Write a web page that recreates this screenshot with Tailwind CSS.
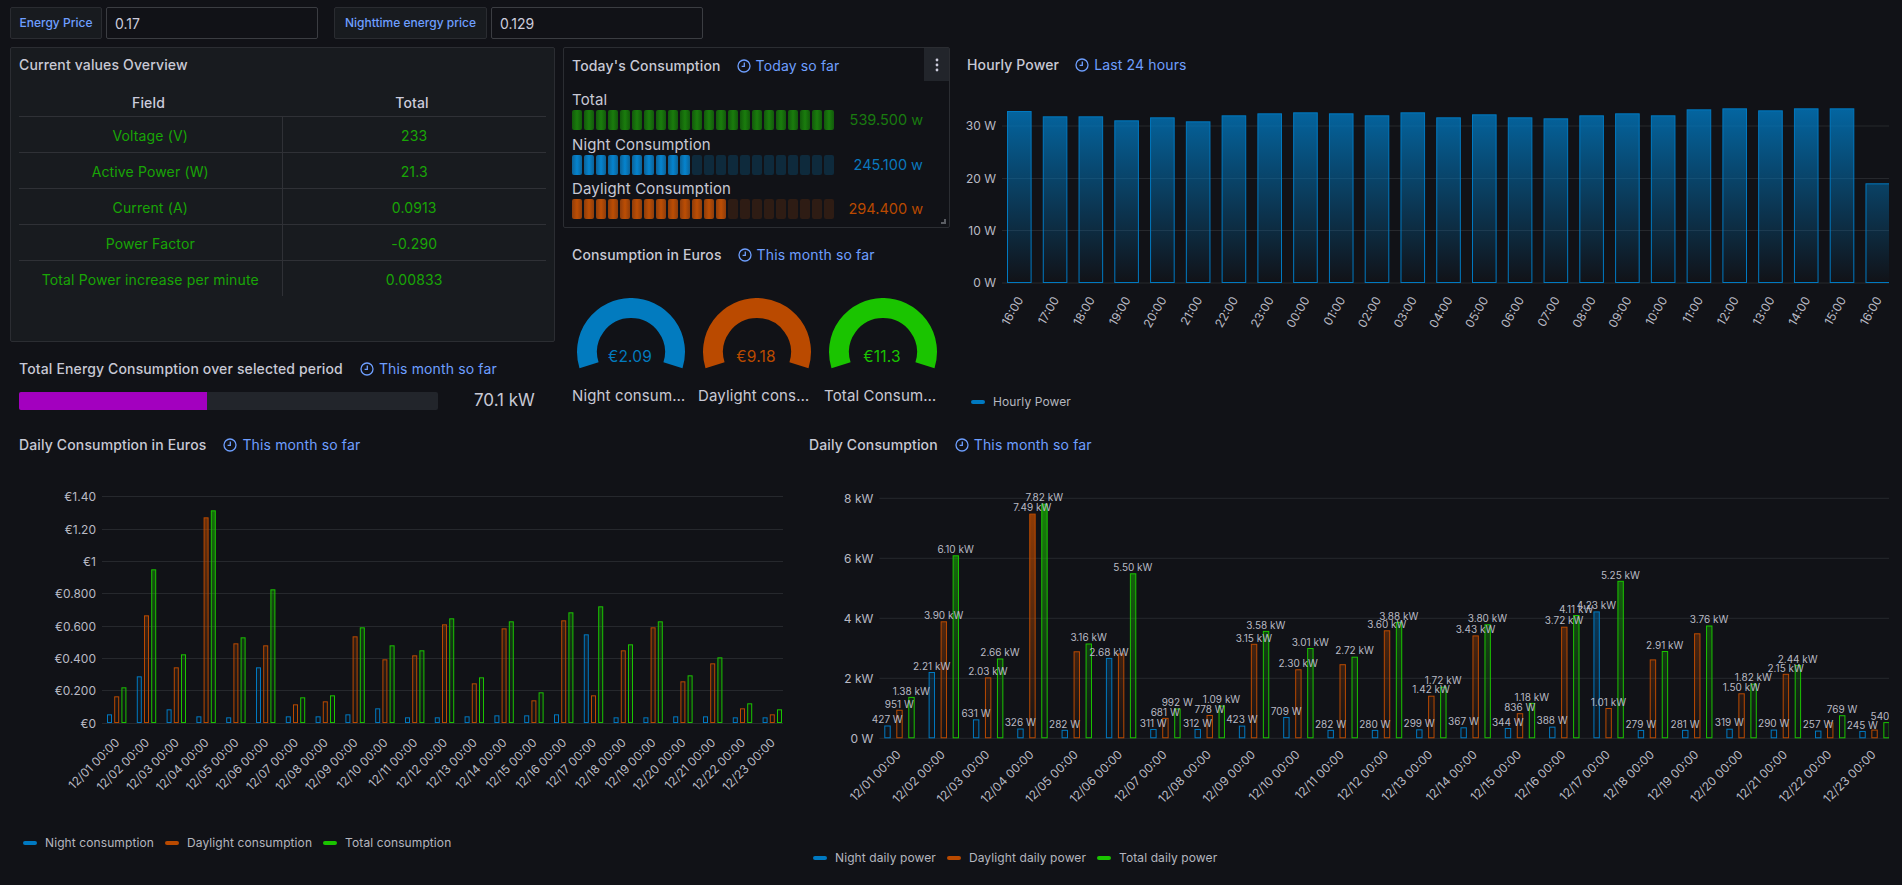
<!DOCTYPE html>
<html lang="en">
<head>
  <meta charset="UTF-8">
  <title>Energy Dashboard</title>
  <script src="https://cdn.jsdelivr.net/npm/@tailwindcss/browser@4"></script>
</head>
<body class="bg-[#111217] text-[#c8c9d5] h-[885px] overflow-hidden tracking-[0.14px] font-[family-name:Inter,sans-serif]">

<!-- VARIABLES -->
<div class="flex gap-1 h-[47px] pt-[7px] pl-[10px] tracking-normal">
  <label class="flex items-center justify-center w-[92px] h-8 border border-[#2a2c31] bg-[#181b1f] rounded-[2px] text-xs font-medium text-[#6e9fff]">Energy Price</label>
  <input value="0.17" class="w-[212px] h-8 px-2 border border-[#3b3d42] bg-[#111217] rounded-[2px] text-sm text-[#ccccdc]">
  <label class="flex items-center justify-center w-[153px] h-8 ml-3 border border-[#2a2c31] bg-[#181b1f] rounded-[2px] text-xs font-medium text-[#6e9fff]">Nighttime energy price</label>
  <input value="0.129" class="w-[212px] h-8 px-2 border border-[#3b3d42] bg-[#111217] rounded-[2px] text-sm text-[#ccccdc]">
</div>

<!-- TOP PANELS -->
<div class="flex h-[383px] pl-[10px]">

  <!-- left column -->
  <div class="w-[545px]">
    <div class="h-[295px] border border-[#2b2d32] bg-[#181b1f] rounded-[2px] px-2">
      <h2 class="flex items-center h-[34px] text-sm font-medium">Current values Overview</h2>
      <table class="w-[527px] mt-2 table-fixed border-collapse text-sm text-center text-[#19a506]">
        <thead>
          <tr class="h-[26px] text-[#ccccdc] font-medium">
            <th class="w-[263px] font-medium pr-1">Field</th>
            <th class="font-medium pr-1">Total</th>
          </tr>
        </thead>
        <tbody class="[&_td]:pt-[3px]">
          <tr class="h-9 border-t border-[#2f3136]"><td>Voltage (V)</td><td class="border-l border-[#2f3136]">233</td></tr>
          <tr class="h-9 border-t border-[#2f3136]"><td>Active Power (W)</td><td class="border-l border-[#2f3136]">21.3</td></tr>
          <tr class="h-9 border-t border-[#2f3136]"><td>Current (A)</td><td class="border-l border-[#2f3136]">0.0913</td></tr>
          <tr class="h-9 border-t border-[#2f3136]"><td>Power Factor</td><td class="border-l border-[#2f3136]">-0.290</td></tr>
          <tr class="h-9 border-t border-[#2f3136]"><td>Total Power increase per minute</td><td class="border-l border-[#2f3136]">0.00833</td></tr>
        </tbody>
      </table>
    </div>

    <div class="pl-[9px]">
      <div class="flex items-center h-[32px] mt-[11px] text-sm">
        <h2 class="font-medium">Total Energy Consumption over selected period</h2>
        <svg class="w-[14px] h-[14px] ml-[17px] mr-[5px] text-[#6e9fff]" viewBox="0 0 14 14" fill="none" stroke="currentColor" stroke-width="1.3"><circle cx="7" cy="7" r="6"/><path d="M7.3 3.4v3.9H4.6"/></svg>
        <span class="text-[#6e9fff]">This month so far</span>
      </div>
      <div class="flex items-center h-[18px] mt-[7px]">
        <div class="w-[419px] h-[18px] bg-[#22252b] rounded-[2px] overflow-hidden">
          <div class="w-[188px] h-full bg-[#a300bf]"></div>
        </div>
        <span class="ml-9 text-[17px] tracking-normal">70.1 kW</span>
      </div>
    </div>
  </div>

  <!-- middle column -->
  <div class="w-[387px] ml-2">
    <div class="relative h-[181px] border border-[#2b2d32] rounded-[2px] pl-2">
      <div class="flex items-center h-[35px] text-sm">
        <h2 class="font-medium">Today's Consumption</h2>
        <svg class="w-[14px] h-[14px] ml-4 mr-[5px] text-[#6e9fff]" viewBox="0 0 14 14" fill="none" stroke="currentColor" stroke-width="1.3"><circle cx="7" cy="7" r="6"/><path d="M7.3 3.4v3.9H4.6"/></svg>
        <span class="text-[#6e9fff]">Today so far</span>
      </div>
      <div id="bar-gauges" class="flex flex-col gap-[4.5px] mt-[7px]"></div>
      <button class="absolute top-0 right-0 flex items-center justify-center w-[25px] h-[33px] bg-[#22252b]">
        <svg width="4" height="14" viewBox="0 0 4 14" fill="#ccccdc"><circle cx="2" cy="2" r="1.4"/><circle cx="2" cy="7" r="1.4"/><circle cx="2" cy="12" r="1.4"/></svg>
      </button>
      <div class="absolute right-[3px] bottom-[3px] w-[5px] h-[5px] border-r-2 border-b-2 border-[#5b5d63]"></div>
    </div>

    <div class="pl-[9px]">
      <div class="flex items-center h-[32px] mt-[11px] text-sm">
        <h2 class="font-medium">Consumption in Euros</h2>
        <svg class="w-[14px] h-[14px] ml-4 mr-[5px] text-[#6e9fff]" viewBox="0 0 14 14" fill="none" stroke="currentColor" stroke-width="1.3"><circle cx="7" cy="7" r="6"/><path d="M7.3 3.4v3.9H4.6"/></svg>
        <span class="text-[#6e9fff]">This month so far</span>
      </div>
      <div id="gauges" class="flex gap-2 mt-[27px]"></div>
    </div>
  </div>

  <!-- right column -->
  <div class="ml-[9px] w-[943px]">
    <div class="flex items-center h-[36px] pl-2 text-sm">
      <h2 class="font-medium">Hourly Power</h2>
      <svg class="w-[14px] h-[14px] ml-4 mr-[5px] text-[#6e9fff]" viewBox="0 0 14 14" fill="none" stroke="currentColor" stroke-width="1.3"><circle cx="7" cy="7" r="6"/><path d="M7.3 3.4v3.9H4.6"/></svg>
      <span class="text-[#6e9fff]">Last 24 hours</span>
    </div>
    <svg id="hourly" class="block tracking-normal" width="943" height="303" viewBox="959 83 943 303"></svg>
    <div class="flex items-center h-8 pl-3 text-xs tracking-[0.1px] text-[#b4b6bf]">
      <span class="w-[14px] h-1 mr-2 rounded-full bg-[#0079c1]"></span>Hourly Power
    </div>
  </div>
</div>

<!-- BOTTOM PANELS -->
<div class="flex">
  <div class="w-[800px]">
    <div class="flex items-center h-[30px] pl-[19px] text-sm">
      <h2 class="font-medium">Daily Consumption in Euros</h2>
      <svg class="w-[14px] h-[14px] ml-[17px] mr-[5px] text-[#6e9fff]" viewBox="0 0 14 14" fill="none" stroke="currentColor" stroke-width="1.3"><circle cx="7" cy="7" r="6"/><path d="M7.3 3.4v3.9H4.6"/></svg>
      <span class="text-[#6e9fff]">This month so far</span>
    </div>
    <svg id="euros" class="block tracking-normal" width="800" height="366" viewBox="0 460 800 366"></svg>
    <div class="flex items-center gap-[11px] h-[34px] pl-[23px] text-xs tracking-[0.1px] text-[#b4b6bf]">
      <div class="flex items-center"><span class="w-[14px] h-1 mr-2 rounded-full bg-[#0079c1]"></span>Night consumption</div>
      <div class="flex items-center"><span class="w-[14px] h-1 mr-2 rounded-full bg-[#ba4a00]"></span>Daylight consumption</div>
      <div class="flex items-center"><span class="w-[14px] h-1 mr-2 rounded-full bg-[#1ac400]"></span>Total consumption</div>
    </div>
  </div>

  <div class="w-[1102px]">
    <div class="flex items-center h-[30px] pl-[9px] text-sm">
      <h2 class="font-medium">Daily Consumption</h2>
      <svg class="w-[14px] h-[14px] ml-[17px] mr-[5px] text-[#6e9fff]" viewBox="0 0 14 14" fill="none" stroke="currentColor" stroke-width="1.3"><circle cx="7" cy="7" r="6"/><path d="M7.3 3.4v3.9H4.6"/></svg>
      <span class="text-[#6e9fff]">This month so far</span>
    </div>
    <svg id="daily" class="block tracking-normal" width="1102" height="381" viewBox="800 460 1102 381"></svg>
    <div class="flex items-center gap-[11px] h-[34px] pl-[13px] text-xs tracking-[0.1px] text-[#b4b6bf]">
      <div class="flex items-center"><span class="w-[14px] h-1 mr-2 rounded-full bg-[#0079c1]"></span>Night daily power</div>
      <div class="flex items-center"><span class="w-[14px] h-1 mr-2 rounded-full bg-[#ba4a00]"></span>Daylight daily power</div>
      <div class="flex items-center"><span class="w-[14px] h-1 mr-2 rounded-full bg-[#1ac400]"></span>Total daily power</div>
    </div>
  </div>
</div>

<script>
  const BLUE = '#0079c1', ORANGE = '#ba4a00', GREEN = '#1ac400';
  const AXIS_TEXT = '#b9bac4', GRID = '#26282d';

  // Bar gauges (LCD cells)
  const barGauges = [
    { label: 'Total', value: '539.500 w', lit: 22, text: 'text-[#197a0f]', on: 'bg-[linear-gradient(90deg,#125a0b,#1a7d0d_50%,#125a0b)]', off: 'bg-[#12300e]' },
    { label: 'Night Consumption', value: '245.100 w', lit: 10, text: 'text-[#0a78bd]', on: 'bg-[linear-gradient(90deg,#0b6298,#0584cf_50%,#0b6298)]', off: 'bg-[#0e2a3c]' },
    { label: 'Daylight Consumption', value: '294.400 w', lit: 13, text: 'text-[#b94900]', on: 'bg-[linear-gradient(90deg,#8f3d0b,#bd4e04_50%,#8f3d0b)]', off: 'bg-[#2e1c14]' }
  ];
  document.getElementById('bar-gauges').innerHTML = barGauges.map(g => {
    let cells = '';
    for (let i = 0; i < 22; i++) {
      cells += `<div class="w-[10px] h-5 rounded-[2px] ${i < g.lit ? g.on : g.off}"></div>`;
    }
    return `
      <div>
        <div class="h-5 leading-5 text-[15px]">${g.label}</div>
        <div class="flex items-center h-5 leading-5">
          <div class="flex gap-[2px]">${cells}</div>
          <div class="flex-1 pr-[26px] text-right text-[14.5px] tracking-normal ${g.text}">${g.value}</div>
        </div>
      </div>`;
  }).join('');

  // Gauges
  const gauges = [
    { label: 'Night consumption', value: '€2.09', color: '#027bbf' },
    { label: 'Daylight consumption', value: '€9.18', color: '#ba4a00' },
    { label: 'Total Consumption', value: '€11.3', color: '#1ac400' }
  ];
  document.getElementById('gauges').innerHTML = gauges.map(g => `
    <div class="w-[118px]">
      <svg class="block" width="118" height="72" viewBox="0 0 118 72">
        <path d="M17.04 67.23A44 44 0 1 1 100.96 67.23" fill="none" stroke="${g.color}" stroke-width="20"/>
        <text x="58" y="64" text-anchor="middle" font-size="15.5" fill="${g.color}">${g.value}</text>
      </svg>
      <div class="mt-[15px] truncate text-[15px]">${g.label}</div>
    </div>`).join('');

  // Shared chart helpers, all coordinates are page pixels thanks to each svg's viewBox
  function gradient(id, color, y1, y2, alpha) {
    return `<linearGradient id="${id}" gradientUnits="userSpaceOnUse" x1="0" x2="0" y1="${y1}" y2="${y2}">
      <stop offset="0" stop-color="${color}" stop-opacity="${alpha}"/><stop offset="1" stop-color="${color}" stop-opacity="0"/>
    </linearGradient>`;
  }
  function gridLines(x1, x2, ticks) {
    return ticks.map(t => `
      <line x1="${x1}" x2="${x2}" y1="${t[1]}" y2="${t[1]}" stroke="${GRID}"/>
      <text x="${x1 - 6}" y="${t[1] + 1}" text-anchor="end" dominant-baseline="middle" font-size="12" fill="${AXIS_TEXT}">${t[0]}</text>`).join('');
  }
  function bar(x, top, w, bottom, color, fill) {
    return `<rect x="${x + 0.5}" y="${top + 0.5}" width="${w - 1}" height="${Math.max(bottom - top - 1, 1)}" fill="url(#${fill})" stroke="${color}"/>`;
  }
  function xLabel(x, y, angle, text) {
    return `<text transform="translate(${x} ${y}) rotate(${angle})" text-anchor="end" dominant-baseline="middle" font-size="12" fill="${AXIS_TEXT}">${text}</text>`;
  }
  const DAYS = Array.from({ length: 23 }, (_, i) => `12/${String(i + 1).padStart(2, '0')} 00:00`);

  // Hourly power
  const hourlyTops = [213,229,229,241,232,244,226,220,217,220,226,217,232,223,232,235,226,220,226,208,205,211,205,205,430];
  const hours = ['16:00','17:00','18:00','19:00','20:00','21:00','22:00','23:00','00:00','01:00','02:00','03:00','04:00','05:00','06:00','07:00','08:00','09:00','10:00','11:00','12:00','13:00','14:00','15:00','16:00'];
  let hourly = `<defs>${gradient('h-blue', BLUE, 100, 283, 0.85)}<clipPath id="h-clip"><rect x="1002" y="83" width="887" height="210"/></clipPath></defs>`;
  hourly += gridLines(1002, 1889, [['30 W', 126], ['20 W', 178.5], ['10 W', 230.5], ['0 W', 283]]);
  hourly += '<g clip-path="url(#h-clip)">';
  hourlyTops.forEach((t, i) => {
    hourly += bar(1007 + i * 35.77, 40 + t / 3, 24.6, 283, BLUE, 'h-blue');
  });
  hourly += '</g>';
  hours.forEach((h, i) => {
    hourly += xLabel(1021 + i * 35.77, 298, -60, h);
  });
  document.getElementById('hourly').innerHTML = hourly;

  // Daily consumption in euros, tops are read in 1/3 px above y=430
  const euroTops = [
    [853,799,772],[739,556,418],[838,712,673],[859,262,241],[862,640,622],[712,646,478],
    [859,823,802],[859,814,796],[853,619,592],[835,688,646],[862,676,661],[862,583,565],
    [859,760,742],[856,595,574],[856,811,787],[853,571,547],[613,796,529],[862,661,643],
    [862,592,574],[859,754,736],[859,700,682],[862,835,820],[862,853,838]
  ];
  let euros = `<defs>${gradient('e-blue', BLUE, 496, 723, 0.55)}${gradient('e-orange', ORANGE, 496, 723, 0.6)}${gradient('e-green', GREEN, 496, 723, 0.55)}</defs>`;
  euros += gridLines(102, 783, [['€1.40', 496.5], ['€1.20', 529.5], ['€1', 561.5], ['€0.800', 593.5], ['€0.600', 626.5], ['€0.400', 658.5], ['€0.200', 690.5], ['€0', 723.5]]);
  euroTops.forEach((g, i) => {
    const x = 107 + i * 29.8;
    euros += bar(x, 430 + g[0] / 3, 5, 723, BLUE, 'e-blue');
    euros += bar(x + 7.2, 430 + g[1] / 3, 5, 723, ORANGE, 'e-orange');
    euros += bar(x + 14.4, 430 + g[2] / 3, 5, 723, GREEN, 'e-green');
    euros += xLabel(x + 11, 741, -45, DAYS[i]);
  });
  document.getElementById('euros').innerHTML = euros;

  // Daily consumption in kW
  const dailyKw = [
    [0.427,0.951,1.38],[2.21,3.90,6.10],[0.631,2.03,2.66],[0.326,7.49,7.82],[0.282,2.90,3.16],[2.68,2.83,5.50],
    [0.311,0.681,0.992],[0.312,0.778,1.09],[0.423,3.15,3.58],[0.709,2.30,3.01],[0.282,2.47,2.72],[0.280,3.60,3.88],
    [0.299,1.42,1.72],[0.367,3.43,3.80],[0.344,0.836,1.18],[0.388,3.72,4.11],[4.23,1.01,5.25],[0.279,2.63,2.91],
    [0.281,3.50,3.76],[0.319,1.50,1.82],[0.290,2.15,2.44],[0.257,0.53,0.769],[0.245,0.29,0.540]
  ];
  // Orange labels that Grafana drops when they collide
  const hiddenLabels = [4, 5, 10, 17, 18, 21, 22];
  const fmt = v => v < 1 ? `${Math.round(v * 1000)} W` : `${v.toFixed(2)} kW`;
  const y0 = 738.3;
  let daily = `<defs>${gradient('d-blue', BLUE, 498, 738, 0.75)}${gradient('d-orange', ORANGE, 498, 738, 0.8)}${gradient('d-green', GREEN, 498, 738, 0.65)}
    <clipPath id="d-clip"><rect x="800" y="460" width="1089" height="290"/></clipPath></defs>`;
  daily += gridLines(879.3, 1889, [['8 kW', 498.3], ['6 kW', 558.3], ['4 kW', 618.3], ['2 kW', 678.3], ['0 W', 738.3]]);
  let bars = '', labels = '';
  dailyKw.forEach((g, i) => {
    const x = 884.3 + i * 44.32;
    [[BLUE, 'd-blue'], [ORANGE, 'd-orange'], [GREEN, 'd-green']].forEach((c, j) => {
      const top = y0 - g[j] * 30;
      bars += bar(x + j * 12, top, 6.4, y0, c[0], c[1]);
      if (!(j === 1 && hiddenLabels.includes(i))) {
        labels += `<text x="${x + j * 12 + 3}" y="${top - 5}" text-anchor="middle" dominant-baseline="middle" font-size="10" fill="${AXIS_TEXT}">${fmt(g[j])}</text>`;
      }
    });
    daily += xLabel(x + 15, 753, -45, DAYS[i]);
  });
  daily += `<g clip-path="url(#d-clip)">${bars}${labels}</g>`;
  document.getElementById('daily').innerHTML = daily;
</script>
</body>
</html>
